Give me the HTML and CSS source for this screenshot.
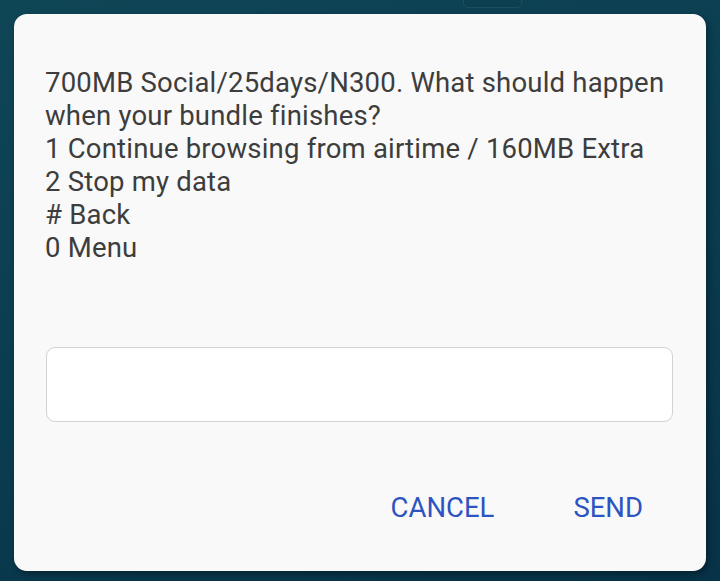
FILE: index.html
```html
<!DOCTYPE html>
<html>
<head>
<meta charset="utf-8">
<link rel="stylesheet" href="styles.css">
</head>
<body>
<div class="handle"></div>
<div class="dialog">
  <div class="message">700MB Social/25days/N300. What should happen<br>when your bundle finishes?<br>1 Continue browsing from airtime / 160MB Extra<br>2 Stop my data<br># Back<br>0 Menu</div>
  <div class="input"></div>
  <div class="actions">
    <span class="btn">CANCEL</span>
    <span class="btn">SEND</span>
  </div>
</div>
</body>
</html>
```
FILE: styles.css
```css
html, body {
  margin: 0;
  padding: 0;
}
body {
  width: 720px;
  height: 581px;
  overflow: hidden;
  position: relative;
  background: linear-gradient(160deg, #0f4656 0%, #0a3c50 50%, #073247 100%);
  font-family: Roboto, "Noto Sans", sans-serif;
  padding: 14px;
  box-sizing: border-box;
}
.handle {
  position: absolute;
  left: 463px;
  top: -6px;
  width: 57px;
  height: 12px;
  border-radius: 5px;
  background: #0c3e4e;
  border: 1px solid #24586a;
  opacity: 0.6;
}
.dialog {
  width: 692px;
  height: 557px;
  box-sizing: border-box;
  background: #f9f9f9;
  border-radius: 13px;
  box-shadow: 2px 3px 6px rgba(0, 0, 0, 0.35);
  padding: 52px 33px 0 31px;
}
.message {
  font-size: 27.5px;
  letter-spacing: 0.2px;
  line-height: 33px;
  color: #3d3d3d;
  white-space: nowrap;
}
.input {
  margin-top: 83px;
  margin-left: 1px;
  height: 75px;
  box-sizing: border-box;
  background: #ffffff;
  border: 1px solid #d2d2d2;
  border-radius: 9px;
}
.actions {
  display: flex;
  justify-content: flex-end;
  gap: 79px;
  margin-top: 71px;
  padding-right: 30px;
}
.btn {
  font-size: 27.5px;
  line-height: 30px;
  color: #2d54c0;
}
```
